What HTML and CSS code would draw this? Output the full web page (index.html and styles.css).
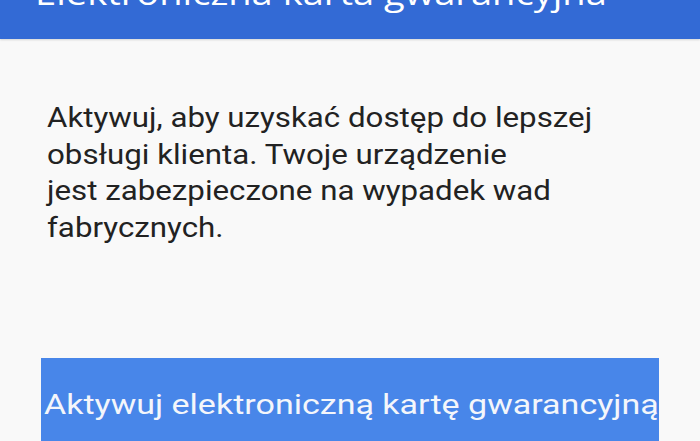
FILE: index.html
```html
<!DOCTYPE html>
<html lang="pl">
<head>
<meta charset="utf-8">
<link rel="stylesheet" href="styles.css">
</head>
<body>
<header class="topbar"><h1 class="title">Elektroniczna karta gwarancyjna</h1></header>
<main class="content">
<p class="desc">Aktywuj, aby uzyskać dostęp do lepszej obsługi klienta. Twoje urządzenie<br>jest zabezpieczone na wypadek wad fabrycznych.</p>
<button class="activate"><span class="label">Aktywuj elektroniczną kartę gwarancyjną</span></button>
</main>
</body>
</html>
```
FILE: styles.css
```css
html, body {
  margin: 0;
  padding: 0;
  background: #f9f9f9;
  width: 700px;
  height: 441px;
  overflow: hidden;
}
.topbar {
  height: 39px;
  background: #336ad5;
  overflow: hidden;
  box-shadow: 0 1px 2px rgba(0,0,0,0.15);
}
.title {
  margin: -29px 0 0 35px;
  font-family: "Open Sans", sans-serif;
  font-weight: 400;
  font-size: 32px;
  line-height: 44px;
  color: #ffffff;
  white-space: nowrap;
  transform: scaleX(1.19);
  transform-origin: left center;
}
.content {
  padding: 61px 0 0 47px;
  display: flex;
  flex-direction: column;
}
.desc {
  margin: 0;
  width: 485px;
  font-family: Roboto, sans-serif;
  font-size: 27px;
  line-height: 36.5px;
  color: #222222;
  transform: scaleX(1.158);
  transform-origin: left top;
}
.activate {
  margin: 112px 0 0 -6px;
  width: 618px;
  height: 90px;
  padding: 4px 0 0 3px;
  border: none;
  background: #4886e9;
  color: #f4f6fb;
  font-family: Roboto, sans-serif;
  font-size: 27px;
  text-align: left;
  white-space: nowrap;
}
.label {
  display: inline-block;
  transform: scaleX(1.26);
  transform-origin: left center;
}
```
